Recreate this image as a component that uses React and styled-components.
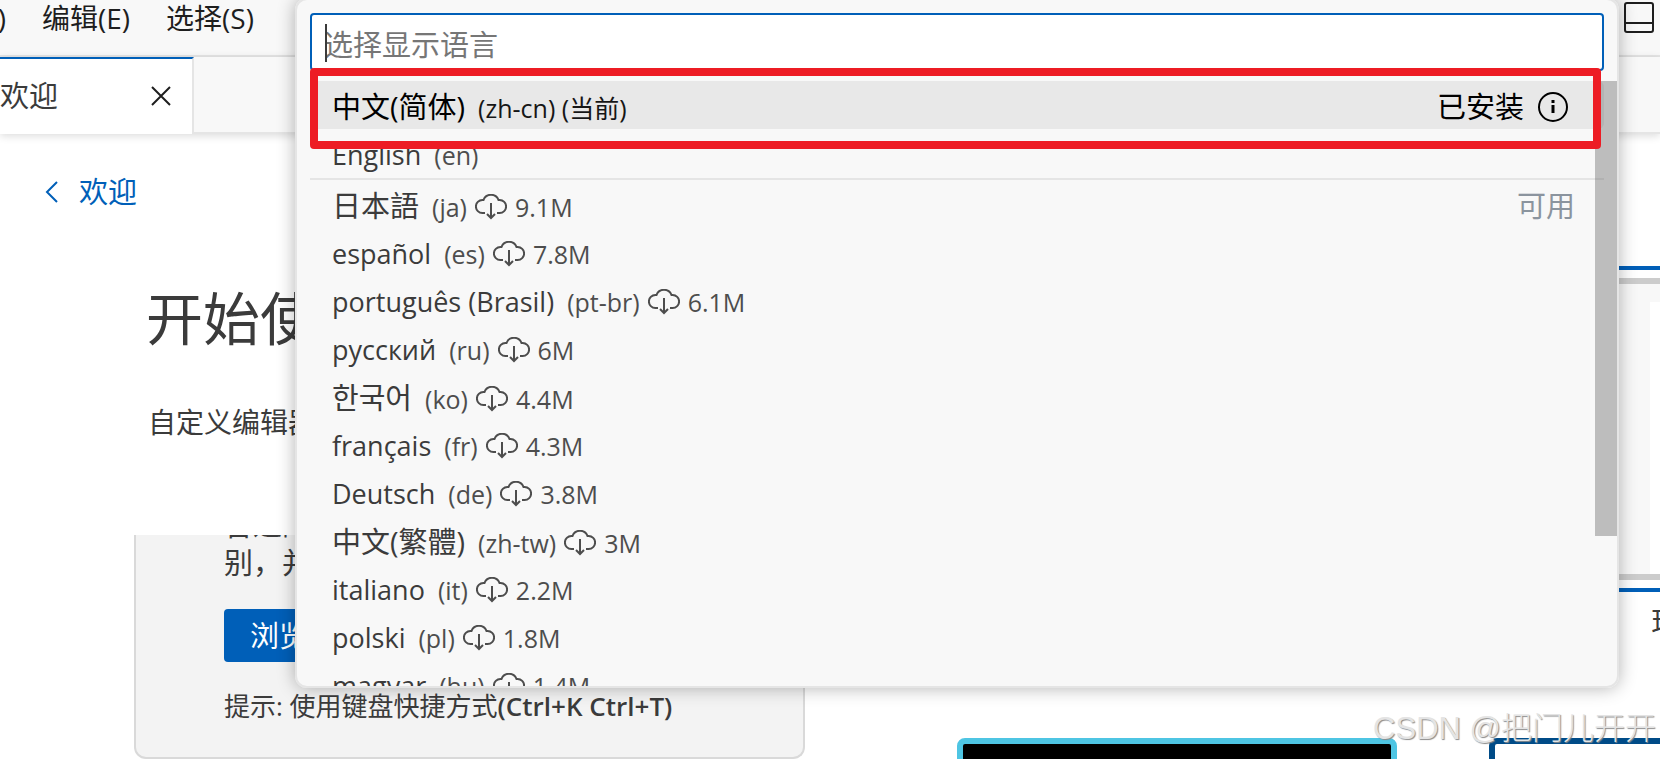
import React from "react";
import styled, { createGlobalStyle } from "styled-components";

const GlobalStyle = createGlobalStyle`
  * { box-sizing: border-box; }
  body {
    margin: 0;
    background: #ffffff;
    color: #3b3b3b;
    font-family: "Open Sans", "Noto Sans CJK SC", sans-serif;
    font-size: 29px;
    line-height: 40px;
  }
  button, input { font: inherit; color: inherit; }
  button { border: 0; padding: 0; background: none; text-align: left; white-space: nowrap; }
`;

const Page = styled.div`
  position: relative;
  height: 100vh;
  overflow: hidden;
  display: flex;
  flex-direction: column;
`;

const MenuBar = styled.header`
  display: flex;
  flex: none;
  align-items: flex-start;
  justify-content: space-between;
  height: 57px;
  padding-right: 4px;
  background: #f8f8f8;
  border-bottom: 2px solid #e5e5e5;
`;

const Menus = styled.nav`
  display: flex;
  gap: 36px;
  margin-left: -81px;
  font-size: 28px;
  line-height: 36px;
  color: #1e1e1e;
`;

const LayoutButton = styled.button`
  display: flex;
  padding: 1px;
`;

const TabStrip = styled.div`
  display: flex;
  flex: none;
  height: 77px;
  background: #f8f8f8;
  box-shadow: 0 2px 8px rgba(0, 0, 0, 0.14);
`;

const Tab = styled.div`
  display: flex;
  align-items: center;
  justify-content: space-between;
  width: 194px;
  padding: 0 20px 2px 0;
  background: #ffffff;
  border-top: 2px solid #005fb8;
  border-right: 2px solid #e5e5e5;
`;

const TabFill = styled.div`
  flex: 1;
  border-bottom: 2px solid #e5e5e5;
`;

const IconButton = styled.button`
  display: flex;
`;

const Content = styled.main`
  display: grid;
  grid-template-columns: 805px auto;
  column-gap: 152px;
  align-items: start;
`;

const Guide = styled.section`
  padding: 38px 0 0 134px;
`;

const BackLink = styled.a`
  display: flex;
  align-items: center;
  gap: 19px;
  margin-left: -90px;
  color: #005fb8;
  text-decoration: none;
`;

const Title = styled.h1`
  margin: 66px 0 0 12px;
  font-size: 57px;
  font-weight: 400;
  line-height: 80px;
  white-space: nowrap;
`;

const Subtitle = styled.p`
  margin: 44px 0 0 14px;
  font-size: 28px;
`;

const Card = styled.div`
  margin-top: 93px;
  height: 224px;
  overflow: hidden;
  display: flex;
  flex-direction: column;
  align-items: flex-start;
  padding: 0 0 0 88px;
  background: #f3f3f3;
  border: 2px solid #d9d9d9;
  border-top: 0;
  border-radius: 0 0 12px 12px;
`;

const CardText = styled.p`
  margin: -29px 0 0;
  line-height: 38px;
`;

const Primary = styled.button`
  height: 53px;
  margin-top: 27px;
  padding: 0 26px;
  border-radius: 4px;
  background: #005fb8;
  color: #ffffff;
`;

const Tip = styled.p`
  margin: 24px 0 0;
  font-size: 26px;

  b { font-weight: 600; }
`;

const Themes = styled.section`
  display: grid;
  grid-template-columns: 440px 440px;
  column-gap: 92px;
  padding-top: 132px;
`;

const Theme = styled.figure`
  margin: 0 -12px;
  height: 472px;
  text-align: center;
`;

const Preview = styled.div`
  height: 326px;
  padding: 8px;
  border: 4px solid ${(p) => (p.$selected ? "#005fb8" : "transparent")};
`;

const PreviewWindow = styled.div`
  height: 302px;
  padding: 18px 0 0 155px;
  border: 6px solid #cccccc;
  background: linear-gradient(#ffffff, #ffffff) content-box, #f8f8f8;
`;

const Label = styled.figcaption`
  padding-top: 10px;
`;

const ContrastPreview = styled.div`
  height: 302px;
  border: 6px solid ${(p) => p.$edge};
  border-radius: 8px;
  background: ${(p) => p.$fill};
`;

const Picker = styled.div`
  position: absolute;
  top: -2px;
  left: 295px;
  right: 41px;
  height: 690px;
  overflow: hidden;
  padding: 13px 0 0;
  background: #f8f8f8;
  border: 2px solid #e5e5e5;
  border-radius: 12px;
`;

const PickerShadow = styled.div`
  position: absolute;
  top: -2px;
  left: 295px;
  right: 41px;
  height: 690px;
  border-radius: 12px;
  box-shadow: 0 0 18px rgba(0, 0, 0, 0.3);
`;

const Field = styled.label`
  position: relative;
  display: block;
  margin: 0 13px;
`;

const Search = styled.input`
  display: block;
  width: 100%;
  height: 58px;
  padding: 4px 12px 0;
  border: 2px solid #005fb8;
  border-radius: 4px;
  outline: 0;
  background: #ffffff;
  &::placeholder { color: #767676; opacity: 1; }
`;

const Caret = styled.span`
  position: absolute;
  top: 11px;
  left: 15px;
  width: 2px;
  height: 38px;
  background: #3b3b3b;
`;

const ListArea = styled.div`
  position: relative;
  padding: 10px 13px 0;
`;

const Group = styled.ul`
  list-style: none;
  margin: 0;
  padding: 0 0 1px;
  & + & { border-top: 2px solid #e5e5e5; }
`;

const Row = styled.button`
  display: flex;
  align-items: center;
  justify-content: space-between;
  width: 100%;
  height: 48px;
  padding: 4px ${(p) => (p.$active ? 35 : 29)}px 0 22px;
  border-radius: 6px;
  background: ${(p) => (p.$active ? "#e8e8e8" : "transparent")};
  color: ${(p) => (p.$active ? "#000000" : "#3b3b3b")};
`;

const Names = styled.span`
  display: flex;
  align-items: baseline;
  gap: 13px;
`;

const Name = styled.span`
  font-size: ${(p) => (p.$latin ? 27 : 29)}px;
`;

const Detail = styled.span`
  display: flex;
  align-items: center;
  gap: 8px;
  font-size: 25px;
  opacity: 0.9;
`;

const Side = styled.span`
  display: flex;
  align-items: center;
  gap: 13px;
  color: ${(p) => (p.$muted ? "#8b949e" : "inherit")};
`;

const ScrollThumb = styled.div`
  position: absolute;
  top: 10px;
  right: 0;
  width: 22px;
  height: 455px;
  background: rgba(100, 100, 100, 0.4);
`;

const Highlight = styled.div`
  position: absolute;
  top: 68px;
  left: 310px;
  right: 59px;
  height: 81px;
  border: 8px solid #ed1c24;
  border-radius: 4px;
`;

const Watermark = styled.div`
  position: absolute;
  right: 4px;
  bottom: 10px;
  color: #e4e4e4;
  font-family: "Liberation Sans", "Noto Sans CJK SC", sans-serif;
  font-size: 31px;
  font-weight: 300;
  text-shadow: 1px 1px 1px #8c8c8c;
`;

const CloudIcon = () => (
  <svg width="32" height="26" viewBox="0 0 32 26" fill="none" stroke="currentColor" strokeWidth="2" aria-hidden="true">
    <path d="M10 19H7.4A6.5 6.5 0 0 1 7.4 6H8.5A8 8 0 0 1 23.5 6H24.6A6.5 6.5 0 0 1 24.6 19H22" />
    <path d="M16 9V24M12 20L16 24L20 20" />
  </svg>
);

const InfoIcon = () => (
  <svg width="32" height="32" viewBox="0 0 32 32" fill="none" stroke="currentColor" strokeWidth="2" aria-hidden="true">
    <circle cx="16" cy="16" r="14" />
    <path d="M16 14V22" strokeWidth="3" />
    <path d="M16 9V12" strokeWidth="3" />
  </svg>
);

const CloseIcon = () => (
  <svg width="22" height="22" viewBox="0 0 22 22" fill="none" stroke="#1e1e1e" strokeWidth="2" aria-hidden="true">
    <path d="M2 2L20 20M20 2L2 20" />
  </svg>
);

const BackIcon = () => (
  <svg width="16" height="24" viewBox="0 0 16 24" fill="none" stroke="currentColor" strokeWidth="2" aria-hidden="true">
    <path d="M13 2L3 12L13 22" />
  </svg>
);

const PanelIcon = () => (
  <svg width="32" height="32" viewBox="0 0 32 32" fill="none" stroke="#1e1e1e" strokeWidth="2" aria-hidden="true">
    <rect x="2" y="2" width="28" height="29" rx="2" />
    <path d="M2 22H30" />
  </svg>
);

const installed = [
  { name: "中文(简体)", code: "(zh-cn) (当前)", side: "已安装", active: true },
  { name: "English", code: "(en)", latin: true },
];

const available = [
  { name: "日本語", code: "(ja)", size: "9.1M", side: "可用" },
  { name: "español", code: "(es)", size: "7.8M", latin: true },
  { name: "português (Brasil)", code: "(pt-br)", size: "6.1M", latin: true },
  { name: "русский", code: "(ru)", size: "6M", latin: true },
  { name: "한국어", code: "(ko)", size: "4.4M" },
  { name: "français", code: "(fr)", size: "4.3M", latin: true },
  { name: "Deutsch", code: "(de)", size: "3.8M", latin: true },
  { name: "中文(繁體)", code: "(zh-tw)", size: "3M" },
  { name: "italiano", code: "(it)", size: "2.2M", latin: true },
  { name: "polski", code: "(pl)", size: "1.8M", latin: true },
  { name: "magyar", code: "(hu)", size: "1.4M", latin: true },
];

const Language = ({ name, code, size, side, active, latin }) => (
  <li>
    <Row type="button" $active={active}>
      <Names>
        <Name $latin={latin}>{name}</Name>
        <Detail>
          {code}
          {size && <CloudIcon />}
          {size}
        </Detail>
      </Names>
      {side && (
        <Side $muted={!active}>
          {side}
          {active && <InfoIcon />}
        </Side>
      )}
    </Row>
  </li>
);

export default function App() {
  return (
    <Page>
      <GlobalStyle />
      <MenuBar>
        <Menus>
          <button type="button">文件(F)</button>
          <button type="button">编辑(E)</button>
          <button type="button">选择(S)</button>
        </Menus>
        <LayoutButton type="button" aria-label="切换面板">
          <PanelIcon />
        </LayoutButton>
      </MenuBar>
      <TabStrip>
        <Tab>
          欢迎
          <IconButton type="button" aria-label="关闭">
            <CloseIcon />
          </IconButton>
        </Tab>
        <TabFill />
      </TabStrip>
      <Content>
        <Guide>
          <BackLink href="#welcome">
            <BackIcon />
            欢迎
          </BackLink>
          <Title>开始使用</Title>
          <Subtitle>自定义编辑器</Subtitle>
          <Card>
            <CardText>
              合适的
              <br />
              别，并
            </CardText>
            <Primary type="button">浏览</Primary>
            <Tip>
              提示: 使用键盘快捷方式<b>(Ctrl+K Ctrl+T)</b>
            </Tip>
          </Card>
        </Guide>
        <Themes>
          <Theme>
            <Preview />
          </Theme>
          <Theme>
            <Preview $selected>
              <PreviewWindow />
            </Preview>
            <Label>现代浅色</Label>
          </Theme>
          <ContrastPreview $edge="#4ec5e3" $fill="#000000" />
          <ContrastPreview $edge="#004b87" $fill="#ffffff" />
        </Themes>
      </Content>
      <PickerShadow />
      <Picker>
        <Field>
          <Search type="text" placeholder="选择显示语言" aria-label="选择显示语言" />
          <Caret />
        </Field>
        <ListArea>
          <Group>
            {installed.map((l) => (
              <Language key={l.code} {...l} />
            ))}
          </Group>
          <Group>
            {available.map((l) => (
              <Language key={l.code} {...l} />
            ))}
          </Group>
          <ScrollThumb />
        </ListArea>
      </Picker>
      <Highlight />
      <Watermark>CSDN @把门儿开开</Watermark>
    </Page>
  );
}
